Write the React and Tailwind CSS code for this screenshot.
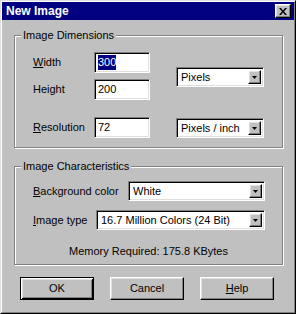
import React from 'react';

const raised =
  'border border-t-white border-l-white border-r-black border-b-black shadow-[inset_-1px_-1px_0_#808080,inset_1px_1px_0_#dfdfdf] bg-[#c0c0c0]';
const sunken =
  'border border-t-[#808080] border-l-[#808080] border-r-white border-b-white shadow-[inset_1px_1px_0_#000,inset_-1px_-1px_0_#dfdfdf] bg-white';

const Field = ({ children, selected }) => (
  <div className={`${sunken} w-[56px] h-[21px] flex items-center pl-[3px]`}>
    {selected ? <span className="bg-[#000080] text-white leading-[15px]">{children}</span> : children}
  </div>
);

const Select = ({ value, width }) => (
  <div className={`${sunken} ${width} h-[20px] flex items-center p-[2px] pl-[4px]`}>
    <span className="flex-1">{value}</span>
    <div className={`${raised} w-[13px] h-full flex items-center justify-center`}>
      <svg width="5" height="3" viewBox="0 0 5 3">
        <path d="M0 0h5L2.5 3z" fill="#000" />
      </svg>
    </div>
  </div>
);

const Group = ({ title, className, children }) => (
  <div
    className={`relative border border-[#808080] shadow-[inset_1px_1px_0_#fff,1px_1px_0_#fff] ml-[12px] mr-[11px] ${className}`}
  >
    <span className="absolute left-[6px] top-[-8px] bg-[#c0c0c0] px-[2px] leading-[14px]">{title}</span>
    {children}
  </div>
);

const Button = ({ children, isDefault }) => (
  <div
    className={
      isDefault
        ? 'w-[74px] h-[23px] bg-[#c0c0c0] border border-black shadow-[inset_1px_1px_0_#fff,inset_-1px_-1px_0_#000,inset_2px_2px_0_#dfdfdf,inset_-2px_-2px_0_#808080] flex items-center justify-center'
        : `${raised} w-[74px] h-[23px] flex items-center justify-center`
    }
  >
    {children}
  </div>
);

export default function App() {
  return (
    <div className="w-[296px] h-[314px] bg-[#c0c0c0] border border-t-[#dfdfdf] border-l-[#dfdfdf] border-r-black border-b-black font-['Liberation_Sans',Arial,sans-serif] text-[11px] text-black">
      <div className="h-full border border-t-white border-l-white border-r-[#808080] border-b-[#808080] flex flex-col">
        <div className="h-[18px] bg-[#000080] flex items-center pl-[4px] pr-[3px]">
          <span className="flex-1 text-white font-bold text-[12px]">New Image</span>
          <div className={`${raised} w-[16px] h-[14px] flex items-center justify-center`}>
            <svg width="8" height="7" viewBox="0 0 8 7">
              <path d="M0 0h2l2 2.5L6 0h2L5 3.5 8 7H6L4 4.5 2 7H0l3-3.5z" fill="#000" />
            </svg>
          </div>
        </div>

        <Group title="Image Dimensions" className="mt-[15px] pt-[16px] pb-[9px] pl-[18px]">
          <div className="flex">
            <div className="flex flex-col">
              <div className="flex items-center h-[21px]">
                <span className="w-[61px]"><u>W</u>idth</span>
                <Field selected>300</Field>
              </div>
              <div className="flex items-center h-[21px] mt-[6px]">
                <span className="w-[61px]">Height</span>
                <Field>200</Field>
              </div>
              <div className="flex items-center h-[21px] mt-[17px]">
                <span className="w-[61px]"><u>R</u>esolution</span>
                <Field>72</Field>
              </div>
            </div>
            <div className="flex flex-col ml-[26px] pt-[15px] gap-[31px]">
              <Select value="Pixels" width="w-[88px]" />
              <Select value="Pixels / inch" width="w-[88px]" />
            </div>
          </div>
        </Group>

        <Group title="Image Characteristics" className="mt-[18px] pt-[14px] pb-[6px] pl-[18px] pr-[17px]">
          <div className="flex items-center justify-between">
            <span><u>B</u>ackground color</span>
            <Select value="White" width="w-[137px]" />
          </div>
          <div className="flex items-center justify-between mt-[9px]">
            <span><u>I</u>mage type</span>
            <Select value="16.7 Million Colors (24 Bit)" width="w-[169px]" />
          </div>
          <div className="mt-[15px] leading-[13px] text-center -ml-[18px] -mr-[17px]">
            Memory Required: 175.8 KBytes
          </div>
        </Group>

        <div className="flex gap-[16px] mt-[12px] ml-[18px]">
          <Button isDefault>OK</Button>
          <Button>Cancel</Button>
          <Button><u>H</u>elp</Button>
        </div>
      </div>
    </div>
  );
}
